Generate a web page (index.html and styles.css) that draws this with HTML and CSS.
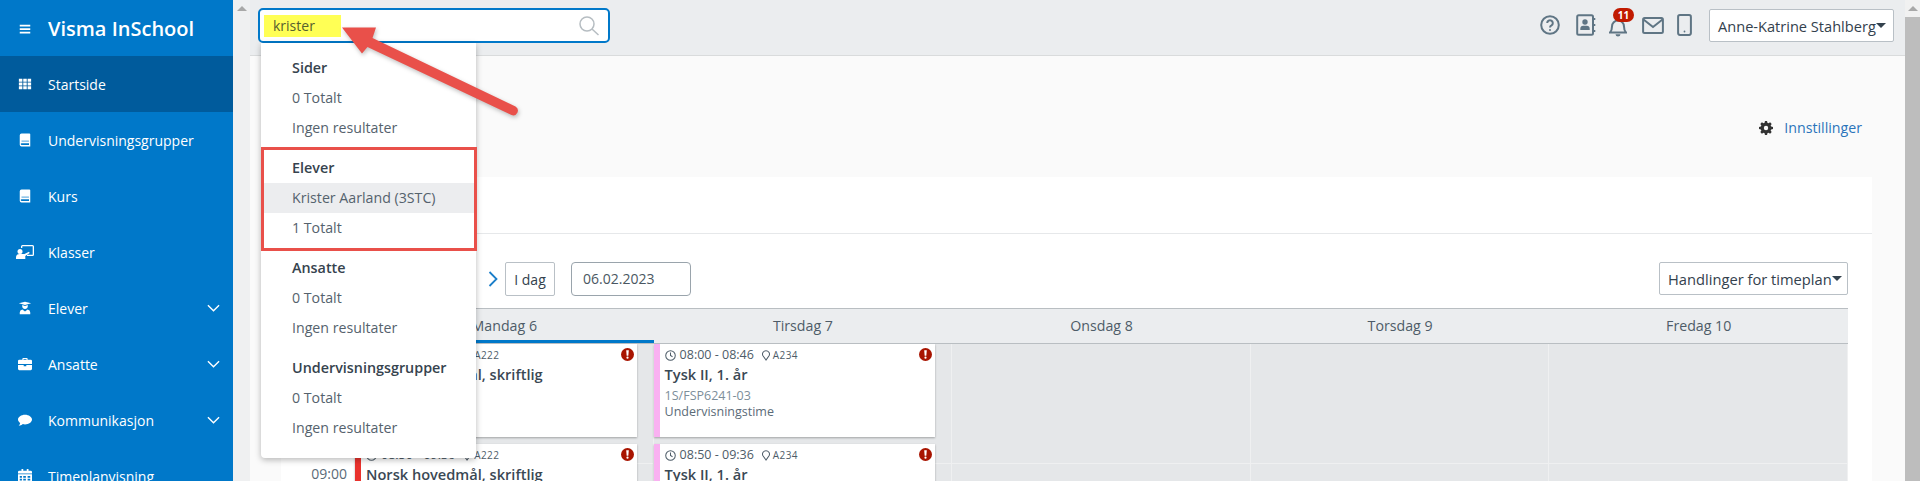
FILE: index.html
```html
<!DOCTYPE html>
<html lang="nb">
<head>
<meta charset="utf-8">
<title>Visma InSchool</title>
<link rel="stylesheet" href="styles.css">
</head>
<body>
<div class="app">
  <aside class="sidebar">
    <div class="brand">
      <svg class="nav-icon burger" viewBox="0 0 16 16"><path d="M2 3h12v2H2zM2 7h12v2H2zM2 11h12v2H2z"/></svg>
      <span class="brand-name">Visma InSchool</span>
    </div>
    <nav>
      <a class="nav-item active"><svg class="nav-icon" viewBox="0 0 16 16"><path d="M1 2h4v3.4H1zM6 2h4v3.4H6zM11 2h4v3.4h-4zM1 6.3h4v3.4H1zM6 6.3h4v3.4H6zM11 6.3h4v3.4h-4zM1 10.6h4V14H1zM6 10.6h4V14H6zM11 10.6h4V14h-4z"/></svg><span>Startside</span></a>
      <a class="nav-item"><svg class="nav-icon" viewBox="0 0 16 16"><path d="M4 0.500h9a1 1 0 0 1 1 1V15.500H4a2 2 0 0 1-2-2V2.500a2 2 0 0 1 2-2zM4 11.800a.9.9 0 0 0 0 1.800h8.600v-1.800z" fill-rule="evenodd"/><path class="stripe" d="M4 8.500h8.500v1.600H4z"/></svg><span>Undervisningsgrupper</span></a>
      <a class="nav-item"><svg class="nav-icon" viewBox="0 0 16 16"><path d="M4 0.500h9a1 1 0 0 1 1 1V15.500H4a2 2 0 0 1-2-2V2.500a2 2 0 0 1 2-2zM4 11.800a.9.9 0 0 0 0 1.800h8.600v-1.800z" fill-rule="evenodd"/><path class="stripe" d="M4 8.500h8.500v1.600H4z"/></svg><span>Kurs</span></a>
      <a class="nav-item"><svg class="nav-icon wide" viewBox="0 0 18 14"><path d="M5 1.500A1.500 1.500 0 0 1 6.500 0h10A1.500 1.500 0 0 1 18 1.500v8a1.500 1.500 0 0 1-1.500 1.500H11V9.700h5.500a.2.2 0 0 0 .2-.2v-8a.2.2 0 0 0-.2-.2h-10a.2.2 0 0 0-.2.2V3H5z"/><circle cx="4" cy="6.500" r="2.500"/><path d="M0 14v-1.500A3.500 3.500 0 0 1 3.500 9h5L13 6.800l.7 1.200-4.400 3v3z"/></svg><span>Klasser</span></a>
      <a class="nav-item has-sub"><svg class="nav-icon" viewBox="0 0 16 16"><path d="M1 2.600L8 .8l7 1.800-7 2.100zM4.800 4.600L8 5.600l3.200-1v1.200a3.200 3.200 0 0 1-6.400 0z"/><path d="M2 15.200v-2a3.700 3.700 0 0 1 3-3.600L8 12l3-2.400a3.700 3.700 0 0 1 3 3.600v2z"/></svg><span>Elever</span><svg class="chev" viewBox="0 0 14 8"><path d="M1 1l6 6 6-6"/></svg></a>
      <a class="nav-item has-sub"><svg class="nav-icon" viewBox="0 0 16 16"><path d="M5 3V2a1 1 0 0 1 1-1h4a1 1 0 0 1 1 1v1h3.500A1.500 1.500 0 0 1 16 4.500V8H0V4.500A1.500 1.500 0 0 1 1.500 3zm1.300 0h3.400V2.300H6.300zM0 9h6.500v1.500h3V9H16v4.500a1.500 1.500 0 0 1-1.500 1.500h-13A1.500 1.500 0 0 1 0 13.500z" fill-rule="evenodd"/></svg><span>Ansatte</span><svg class="chev" viewBox="0 0 14 8"><path d="M1 1l6 6 6-6"/></svg></a>
      <a class="nav-item has-sub"><svg class="nav-icon" viewBox="0 0 16 16"><path d="M8 2c4.400 0 8 2.500 8 5.500S12.400 13 8 13c-.9 0-1.700-.1-2.500-.3C4.300 13.800 2.600 14.500.8 14.500c.9-1 1.500-2 1.700-3.100C.9 10.400 0 9 0 7.500 0 4.500 3.600 2 8 2z"/></svg><span>Kommunikasjon</span><svg class="chev" viewBox="0 0 14 8"><path d="M1 1l6 6 6-6"/></svg></a>
      <a class="nav-item"><svg class="nav-icon" viewBox="0 0 16 16"><path d="M4 0h2v2h4V0h2v2h2.500A1.500 1.500 0 0 1 16 3.500V5H0V3.500A1.500 1.500 0 0 1 1.500 2H4zM0 6h16v8.500a1.500 1.500 0 0 1-1.500 1.500h-13A1.500 1.500 0 0 1 0 14.500zm2 2v2h2.500V8zm4 0v2h3V8zm5 0v2h3V8zm-9 3v2h2.500v-2zm4 0v2h3v-2zm5 0v2h3v-2z" fill-rule="evenodd"/></svg><span>Timeplanvisning</span></a>
    </nav>
  </aside>

  <div class="gutter"><span class="arrow-up"></span></div>

  <div class="main">
    <header class="topbar">
      <div class="search">
        <span class="search-text">krister</span>
        <svg class="search-icon" viewBox="0 0 20 20"><circle cx="8" cy="8" r="7"/><path d="M13 13l6.500 6"/></svg>
      </div>
      <div class="top-actions">
        <svg class="top-icon" width="20" height="20" viewBox="0 0 20 20"><circle cx="10" cy="10" r="8.800"/><path d="M7.200 8a2.800 2.800 0 1 1 4.300 2.400c-1 .6-1.500 1-1.500 2.100"/><circle class="solid" cx="10" cy="15" r="1"/></svg>
        <svg class="top-icon" width="20" height="22" viewBox="0 0 20 22"><rect x="1.200" y="1.200" width="15.800" height="19.600" rx="1.500"/><circle class="solid" cx="9" cy="8" r="2.700"/><path class="solid" d="M4.300 16v-1.200a3 3 0 0 1 3-3h3.400a3 3 0 0 1 3 3V16z"/><path d="M17 5h2.300M17 11h2.300M17 17h2.300"/></svg>
        <span class="bell">
          <svg class="top-icon" width="18" height="20" viewBox="0 0 18 20"><path d="M1 15.500c1.500-1.500 2-3 2-6a6 6 0 0 1 12 0c0 3 .5 4.500 2 6z"/><path class="solid" d="M6.500 17.200h5A2.500 2.500 0 0 1 9 19.500a2.500 2.500 0 0 1-2.500-2.300z"/></svg>
          <span class="badge">11</span>
        </span>
        <svg class="top-icon" width="22" height="17" viewBox="0 0 22 17"><rect x="1.100" y="1.100" width="19.800" height="14.800" rx="1.500"/><path d="M1.500 2.500L11 10l9.500-7.500"/></svg>
        <svg class="top-icon" width="15" height="22" viewBox="0 0 15 22"><rect x="1.100" y="1.100" width="12.800" height="19.800" rx="1.800"/><circle class="solid" cx="7.500" cy="17.500" r=".9"/></svg>
        <button class="select-btn user-btn">Anne-Katrine Stahlberg<span class="caret"></span></button>
      </div>
    </header>

    <section class="content">
      <div class="settings-row">
        <svg class="gear" viewBox="0 0 16 16"><path d="M6.800 0h2.400l.4 2.100 1.300.6L12.700 1.500l1.800 1.800-1.200 1.800.6 1.300 2.100.4v2.400l-2.100.4-.6 1.300 1.200 1.800-1.800 1.800-1.800-1.200-1.300.6-.4 2.100H6.800l-.4-2.100-1.300-.6-1.800 1.200-1.800-1.800 1.200-1.800-.6-1.300L0 9.200V6.800l2.100-.4.6-1.300-1.200-1.800 1.800-1.800 1.800 1.200 1.300-.6zM8 5.500a2.500 2.500 0 1 0 0 5 2.500 2.500 0 0 0 0-5z" fill-rule="evenodd"/></svg>
        <a class="settings-link">Innstillinger</a>
      </div>
      <div class="card">
        <div class="card-head"></div>
        <div class="toolbar">
          <svg class="next" viewBox="0 0 10 16"><path d="M1.500 1l7 7-7 7"/></svg>
          <button class="today">I dag</button>
          <div class="date">06.02.2023</div>
          <button class="select-btn plan-btn">Handlinger for timeplan<span class="caret"></span></button>
        </div>
        <div class="cal-head">
          <div></div>
          <div class="day today-col">Mandag 6</div>
          <div class="day">Tirsdag 7</div>
          <div class="day">Onsdag 8</div>
          <div class="day">Torsdag 9</div>
          <div class="day">Fredag 10</div>
        </div>
        <div class="cal-body">
          <div class="times">09:00</div>
          <div class="col">
            <article class="event red">
              <div class="when"><svg class="mini" viewBox="0 0 12 12"><circle cx="6" cy="6" r="5.200"/><path d="M6 2.800V6l2.200 1.400"/></svg><span>08:00 - 08:46</span><svg class="mini pin" viewBox="0 0 10 12"><path d="M5 11L1.500 6A3.800 3.800 0 1 1 8.500 6z"/></svg><span class="room">A222</span></div>
              <h3>Norsk hovedmål, skriftlig</h3>
              <svg class="alert" viewBox="0 0 14 14"><circle cx="7" cy="7" r="7"/><path class="mark" d="M5.600 2.400h2.800l-.5 6H6.100zM7 9.200a1.200 1.200 0 1 1 0 2.400 1.200 1.200 0 0 1 0-2.400z"/></svg>
            </article>
            <article class="event red">
              <div class="when"><svg class="mini" viewBox="0 0 12 12"><circle cx="6" cy="6" r="5.200"/><path d="M6 2.800V6l2.200 1.400"/></svg><span>08:50 - 09:36</span><svg class="mini pin" viewBox="0 0 10 12"><path d="M5 11L1.500 6A3.800 3.800 0 1 1 8.500 6z"/></svg><span class="room">A222</span></div>
              <h3>Norsk hovedmål, skriftlig</h3>
              <svg class="alert" viewBox="0 0 14 14"><circle cx="7" cy="7" r="7"/><path class="mark" d="M5.600 2.400h2.800l-.5 6H6.100zM7 9.200a1.200 1.200 0 1 1 0 2.400 1.200 1.200 0 0 1 0-2.400z"/></svg>
            </article>
          </div>
          <div class="col">
            <article class="event pink">
              <div class="when"><svg class="mini" viewBox="0 0 12 12"><circle cx="6" cy="6" r="5.200"/><path d="M6 2.800V6l2.200 1.400"/></svg><span>08:00 - 08:46</span><svg class="mini pin" viewBox="0 0 10 12"><path d="M5 11L1.500 6A3.800 3.800 0 1 1 8.500 6z"/></svg><span class="room">A234</span></div>
              <h3>Tysk II, 1. år</h3>
              <p class="code">1S/FSP6241-03</p>
              <p class="kind">Undervisningstime</p>
              <svg class="alert" viewBox="0 0 14 14"><circle cx="7" cy="7" r="7"/><path class="mark" d="M5.600 2.400h2.800l-.5 6H6.100zM7 9.200a1.200 1.200 0 1 1 0 2.400 1.200 1.200 0 0 1 0-2.400z"/></svg>
            </article>
            <article class="event pink">
              <div class="when"><svg class="mini" viewBox="0 0 12 12"><circle cx="6" cy="6" r="5.200"/><path d="M6 2.800V6l2.200 1.400"/></svg><span>08:50 - 09:36</span><svg class="mini pin" viewBox="0 0 10 12"><path d="M5 11L1.500 6A3.800 3.800 0 1 1 8.500 6z"/></svg><span class="room">A234</span></div>
              <h3>Tysk II, 1. år</h3>
              <svg class="alert" viewBox="0 0 14 14"><circle cx="7" cy="7" r="7"/><path class="mark" d="M5.600 2.400h2.800l-.5 6H6.100zM7 9.200a1.200 1.200 0 1 1 0 2.400 1.200 1.200 0 0 1 0-2.400z"/></svg>
            </article>
          </div>
          <div class="col"></div>
          <div class="col"></div>
          <div class="col"></div>
        </div>
      </div>
    </section>

    <div class="results">
      <section class="group">
        <h4>Sider</h4>
        <p>0 Totalt</p>
        <p>Ingen resultater</p>
      </section>
      <section class="group">
        <h4>Elever</h4>
        <p class="hit">Krister Aarland (3STC)</p>
        <p>1 Totalt</p>
      </section>
      <section class="group">
        <h4>Ansatte</h4>
        <p>0 Totalt</p>
        <p>Ingen resultater</p>
      </section>
      <section class="group">
        <h4>Undervisningsgrupper</h4>
        <p>0 Totalt</p>
        <p>Ingen resultater</p>
      </section>
    </div>
  </div>

  <div class="scrollbar"><span class="thumb-top"><span class="arrow-up"></span></span><span class="thumb"></span></div>
</div>

<div class="note-box"></div>
<svg class="note-arrow" viewBox="0 0 1920 481"><path d="M342 27.500H376L372.500 38 515.500 106.500Q519 108.500 517.500 112.500 515.500 116.500 511.500 115L367.500 47 362 53.500Z"/></svg>
</body>
</html>
```
FILE: styles.css
```css
* { box-sizing: border-box; }
html, body { margin: 0; height: 481px; overflow: hidden; }
body { font-family: "Open Sans", "Liberation Sans", sans-serif; font-size: 14px; color: #3f4d58; background: #fafafa; position: relative; }
h3, h4, p { margin: 0; }
button { font: inherit; }

.app { display: flex; width: 1920px; height: 481px; }

/* Sidebar */
.sidebar { flex: 0 0 233px; background: #0078c9; color: #fff; overflow: hidden; }
.brand { display: flex; align-items: center; height: 56px; padding-left: 18px; }
.brand-name { font-size: 20px; font-weight: 600; margin-left: 16px; }
.burger { margin-top: 1px; }
.nav-item { display: flex; align-items: center; height: 56px; padding-left: 18px; padding-right: 13px; font-weight: 500; }
.nav-item > span { margin-left: 16px; flex: 1; }
.nav-item.active { background: #005b9c; }
.nav-icon { width: 14px; height: 14px; flex: none; fill: #fff; }
.nav-icon .stripe { fill: #7fbbe4; }
.nav-icon.wide { width: 18px; margin-left: -2px; margin-right: -2px; }
.chev { width: 13px; height: 8px; fill: none; stroke: #fff; stroke-width: 1.500; }

/* Left and right scroll tracks */
.gutter { flex: 0 0 17px; background: #eff0f1; padding: 6px 0 0 3px; }
.arrow-up { display: block; width: 0; height: 0; margin-left: 1px; border: 5px solid transparent; border-top: 0; border-bottom-color: #a8a8a8; }
.scrollbar { flex: 0 0 15px; display: flex; flex-direction: column; }
.thumb-top { height: 17px; background: #f1f1f1; padding: 6px 0 0 2px; }
.thumb { flex: 1; background: #bdbdbd; }

/* Main */
.main { flex: 1; min-width: 0; display: flex; flex-direction: column; position: relative; }
.topbar { flex: 0 0 56px; display: flex; align-items: flex-start; justify-content: space-between; background: #ebedef; border-bottom: 1px solid #d9dbdc; padding: 8px 11px 0 8px; }
.search { width: 352px; height: 35px; background: #fff; border: 2px solid #0078c9; border-radius: 5px; display: flex; align-items: center; justify-content: space-between; padding: 0 9px 0 4px; }
.search-text { width: 77px; height: 22px; line-height: 22px; background: #ffff55; padding-left: 9px; color: #56602f; }
.search-icon { width: 20px; height: 20px; fill: none; stroke: #b6bdc2; stroke-width: 1.500; }

.top-actions { display: flex; align-items: center; height: 34px; }
.top-icon { fill: none; stroke: #5f7584; stroke-width: 2; display: block; }
.top-icon .solid { fill: #5f7584; stroke: none; }
.top-actions > .top-icon:nth-child(1) { margin-right: 16px; }
.top-actions > .top-icon:nth-child(2) { margin-right: 13px; }
.bell { position: relative; display: block; margin-right: 15px; margin-top: 4px; }
.badge { position: absolute; left: 4px; top: -9px; width: 21px; height: 14px; border-radius: 7px; background: #c11a00; color: #fff; font-size: 10px; font-weight: 700; line-height: 14px; text-align: center; }
.top-actions > .top-icon:nth-child(4) { margin-right: 13px; }
.top-actions > .top-icon:nth-child(5) { margin-right: 17px; }

.select-btn { display: flex; align-items: center; background: #fff; border: 1px solid #b9c0c6; border-radius: 2px; color: #33414d; padding: 0 8px; white-space: nowrap; }
.user-btn { width: 185px; height: 33px; margin-top: 1px; font-size: 14.600px; font-weight: 500; }
.caret { width: 0; height: 0; border: 5px solid transparent; border-bottom: 0; border-top-color: #33414d; flex: none; }

/* Content */
.content { flex: 1; min-height: 0; padding: 0 33px 0 31px; overflow: hidden; }
.settings-row { height: 120px; display: flex; justify-content: flex-end; align-items: center; gap: 11px; padding: 21px 10px 0 0; margin-top: 1px; }
.gear { width: 14px; height: 14px; fill: #333; }
.settings-link { color: #2a74bb; font-size: 14.200px; font-weight: 500; }
.card { background: #fff; padding-right: 24px; height: 400px; }
.card-head { height: 57px; border-bottom: 1px solid #e6e8ea; margin-right: -24px; }

.toolbar { display: flex; align-items: flex-start; height: 74px; padding: 28px 0 0 207px; }
.next { width: 10px; height: 16px; margin: 9px 7px 0 0; fill: none; stroke: #1a7ec9; stroke-width: 1.800; }
.today { width: 50px; height: 34px; background: #fff; border: 1px solid #b9c0c6; border-radius: 2px; color: #33414d; padding: 0; font-weight: 500; }
.date { width: 120px; height: 34px; margin-left: 16px; border: 1px solid #9aa4ac; border-radius: 4px; padding: 0 11px; line-height: 32px; color: #4a5762; }
.plan-btn { width: 189px; height: 33px; margin-left: auto; font-size: 14.700px; font-weight: 500; }

.cal-head { display: grid; grid-template-columns: 74px repeat(5, 1fr); height: 36px; background: #ebedef; border-top: 1px solid #b9bec2; border-bottom: 1px solid #b9bec2; }
.day { text-align: center; line-height: 34px; font-size: 14.200px; color: #4e5c68; font-weight: 500; }
.today-col { height: 34px; border-bottom: 3px solid #0078c9; }

.cal-body { display: grid; grid-template-columns: 74px repeat(5, 1fr); height: 137px; overflow: hidden; background: #e5e7e9; }
.times { background: #fff; padding: 120px 8px 0 0; text-align: right; color: #5b6b78; line-height: 20px; }
.col { display: flex; flex-direction: column; gap: 7px; padding-right: 16px; background: linear-gradient(#eff0f1, #eff0f1) 0 119px / 100% 1px no-repeat; border-right: 1px solid #eff0f1; }
.event { position: relative; flex: 0 0 93px; background: #fff; border-left: 6px solid; box-shadow: 0 1px 2px rgba(0, 0, 0, .3); padding: 2px 0 0 5px; }
.event.red { border-left-color: #e9322d; }
.event.pink { border-left-color: #f9b1f1; }
.when { display: flex; align-items: center; font-size: 12.500px; line-height: 18px; color: #4e5c68; white-space: nowrap; }
.mini { width: 11px; height: 11px; fill: none; stroke: #4e5c68; stroke-width: 1.100; margin-right: 4px; }
.pin { width: 10px; margin-left: 7px; margin-right: 2px; }
.room { font-size: 10px; letter-spacing: .4px; }
.event h3 { font-size: 14.600px; font-weight: 600; line-height: 20px; color: #3a4854; }
.code { font-size: 12.500px; line-height: 16px; color: #7c8e9a; margin-top: 4px; }
.kind { font-size: 12.500px; line-height: 16px; color: #5b6b78; }
.alert { position: absolute; right: 3px; top: 4px; width: 13px; height: 13px; fill: #a81400; }
.alert .mark { fill: #fff; }

/* Search results menu */
.results { position: absolute; left: 11px; top: 43px; width: 215px; height: 415px; background: #fff; padding: 10px 0 0; border-radius: 0 0 4px 4px; box-shadow: 0 2px 6px rgba(0, 0, 0, .28); z-index: 5; }
.group { margin-bottom: 10px; }
.group h4, .group p { height: 30px; line-height: 30px; padding-left: 31px; font-size: 14.200px; white-space: nowrap; }
.group h4 { font-size: 14.350px; font-weight: 600; color: #36434e; }
.group p { color: #55626d; font-weight: 500; }
.group .hit { background: #ecedef; }

/* Annotations on the picture */
.note-box { position: absolute; left: 261px; top: 147px; width: 216px; height: 104px; border: 3px solid #e9504a; z-index: 6; }
.note-arrow { position: absolute; left: 0; top: 0; width: 1920px; height: 481px; fill: #e9504a; z-index: 7; pointer-events: none; filter: drop-shadow(1px 2px 2px rgba(0, 0, 0, .25)); }
```
